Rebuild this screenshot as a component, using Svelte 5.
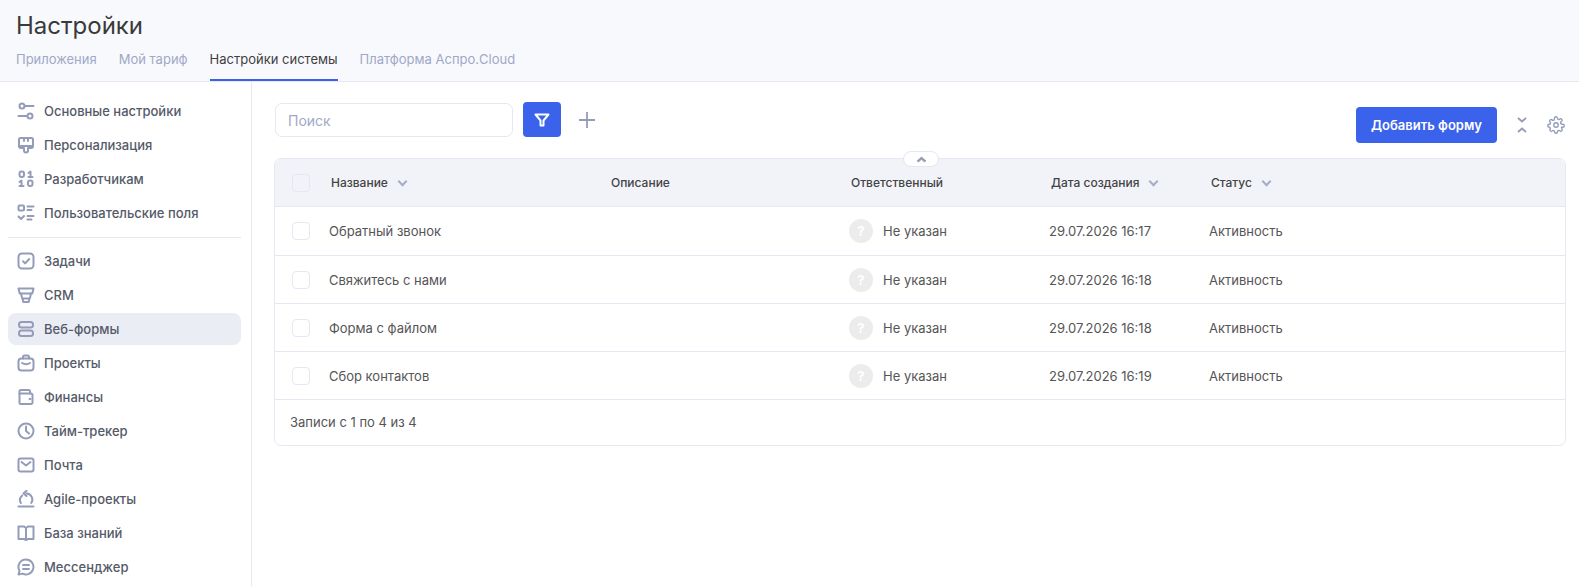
<script>
  const tabs = [
    { label: 'Приложения' },
    { label: 'Мой тариф' },
    { label: 'Настройки системы', active: true },
    { label: 'Платформа Аспро.Cloud' }
  ];

  const groupOne = [
    { label: 'Основные настройки', icon: 'sliders' },
    { label: 'Персонализация', icon: 'brush' },
    { label: 'Разработчикам', icon: 'binary' },
    { label: 'Пользовательские поля', icon: 'fields' }
  ];

  const groupTwo = [
    { label: 'Задачи', icon: 'task' },
    { label: 'CRM', icon: 'funnel' },
    { label: 'Веб-формы', icon: 'forms', active: true },
    { label: 'Проекты', icon: 'case' },
    { label: 'Финансы', icon: 'wallet' },
    { label: 'Тайм-трекер', icon: 'clock' },
    { label: 'Почта', icon: 'mail' },
    { label: 'Agile-проекты', icon: 'agile' },
    { label: 'База знаний', icon: 'book' },
    { label: 'Мессенджер', icon: 'chat' }
  ];

  const rows = [
    { name: 'Обратный звонок', date: '29.07.2026 16:17' },
    { name: 'Свяжитесь с нами', date: '29.07.2026 16:18' },
    { name: 'Форма с файлом', date: '29.07.2026 16:18' },
    { name: 'Сбор контактов', date: '29.07.2026 16:19' }
  ];

  const icons = {
    sliders: '<circle cx="5" cy="4" r="2.500"/><path d="M8 4h8.500"/><circle cx="13" cy="14" r="2.500"/><path d="M1.500 14H10"/>',
    brush: '<path d="M3.500 2h11A1.500 1.500 0 0 1 16 3.500V10H2V3.500A1.500 1.500 0 0 1 3.500 2z"/><path d="M2 10a2 2 0 0 0 2 2h3v2.500a2 2 0 0 0 4 0V12h3a2 2 0 0 0 2-2"/><path d="M7 2v3M11 2v3"/>',
    binary: '<rect x="2.500" y="1.500" width="4.500" height="5.500" rx="2"/><path d="M11.500 3l2-1.500V7M11.500 7h4"/><path d="M2.500 12l2-1.500V16M2.500 16h4"/><rect x="11" y="10.500" width="4.500" height="5.500" rx="2"/>',
    fields: '<rect x="1.500" y="1.500" width="5.500" height="5" rx="1"/><path d="M10.500 2.500h6M10.500 6h4M10.500 12h6M10.500 15.500h4M1.500 12.500l2.500 2.500 3-3"/>',
    task: '<rect x="1.500" y="1.500" width="15" height="15" rx="3.500"/><path d="M6 9.200l2.200 2.200L12.200 7"/>',
    funnel: '<path d="M1.500 2.500h15l-1.200 5H2.700z"/><path d="M4 7.500l1.200 5h7.600l1.200-5M5.500 12.500l.8 3.500h5.400l.8-3.500"/>',
    forms: '<rect x="2" y="2" width="14" height="5.500" rx="2.500"/><rect x="2" y="10.500" width="14" height="5.500" rx="2.500"/>',
    case: '<rect x="1.500" y="4.500" width="15" height="12" rx="3"/><path d="M6 4.500V3a1.500 1.500 0 0 1 1.500-1.500h3A1.500 1.500 0 0 1 12 3v1.500M5 9c2.500 1.500 5.500 1.500 8 0"/>',
    wallet: '<path d="M2.500 5.500V14.500A1.500 1.500 0 0 0 4 16h10a1.500 1.500 0 0 0 1.500-1.500V7A1.500 1.500 0 0 0 14 5.500H2.500z"/><path d="M2.500 5.500V3.500A1.500 1.500 0 0 1 4 2h7.500A1.500 1.500 0 0 1 13 3.500v2"/><path d="M12.500 11h1"/>',
    clock: '<circle cx="9" cy="9" r="7.500"/><path d="M9 4.500V9l3 2.500"/>',
    mail: '<rect x="1.500" y="2.500" width="15" height="13" rx="2"/><path d="M4.500 6l4.500 3.500L13.500 6"/>',
    agile: '<path d="M1.500 16.500h15"/><path d="M3.800 13a6 6 0 0 1 1.400-7.500"/><path d="M9.500 3.500a6 6 0 0 1 4.700 9.500"/><path d="M9.500 .8L6.500 3.500l3 2.500"/>',
    book: '<path d="M1.500 2.500H7L9 4l2-1.500h5.500v12.500H11L9 16l-2-1H1.500zM9 4v12"/>',
    chat: '<path d="M9 1.500a7.500 7.500 0 1 1-3.600 14.100L1.500 16.500l1-3.700A7.500 7.500 0 0 1 9 1.500z"/><path d="M6 7h6M6 11h6"/>'
  };
</script>

<div class="page">
  <header class="top">
    <h1>Настройки</h1>
    <nav class="tabs">
      {#each tabs as tab}
        <span class="tab" class:active={tab.active}>{tab.label}</span>
      {/each}
    </nav>
  </header>

  <div class="body">
    <aside class="side">
      {#each groupOne as item}
        <div class="item">
          <svg class="ic" viewBox="0 0 18 18">{@html icons[item.icon]}</svg>
          <span>{item.label}</span>
        </div>
      {/each}
      <div class="sep"></div>
      {#each groupTwo as item}
        <div class="item" class:active={item.active}>
          <svg class="ic" viewBox="0 0 18 18">{@html icons[item.icon]}</svg>
          <span>{item.label}</span>
        </div>
      {/each}
    </aside>

    <main class="content">
      <div class="toolbar">
        <div class="search">Поиск</div>
        <button class="filter" aria-label="Фильтр">
          <svg viewBox="0 0 16 16" width="16" height="16"><path d="M1.500 2.500h13L9.500 8.500v5h-3v-5z" /></svg>
        </button>
        <svg class="plus" viewBox="0 0 18 18" width="18" height="18"><path d="M9 1v16M1 9h16" /></svg>
        <div class="right">
          <button class="add">Добавить форму</button>
          <svg class="collapse" viewBox="0 0 12 18" width="12" height="18"><path d="M2 2l4 3.500L10 2M2 16l4-3.500 4 3.500" /></svg>
          <svg class="gear" viewBox="0 0 24 24" width="18" height="18">
            <circle cx="12" cy="12" r="3" />
            <path d="M19.400 15a1.650 1.650 0 0 0 .33 1.820l.06.06a2 2 0 1 1-2.830 2.830l-.06-.06a1.650 1.650 0 0 0-2.800 1.170V21a2 2 0 0 1-4 0v-.09a1.650 1.650 0 0 0-2.820-1.110l-.06.06a2 2 0 1 1-2.830-2.830l.06-.06A1.650 1.650 0 0 0 3.090 15H3a2 2 0 0 1 0-4h.09a1.650 1.650 0 0 0 1.110-2.820l-.06-.06a2 2 0 1 1 2.830-2.830l.06.06A1.650 1.650 0 0 0 9.830 4.200V3a2 2 0 0 1 4 0v.09a1.650 1.650 0 0 0 2.800 1.170l.06-.06a2 2 0 1 1 2.830 2.830l-.06.06A1.650 1.650 0 0 0 20.910 11H21a2 2 0 0 1 0 4z" />
          </svg>
        </div>
      </div>

      <div class="table">
        <button class="fold" aria-label="Свернуть">
          <svg viewBox="0 0 12 8" width="11" height="7"><path d="M1.500 6.500L6 2.500l4.500 4" /></svg>
        </button>
        <div class="row head">
          <span class="check"></span>
          <span class="th">Название <i class="sort"></i></span>
          <span class="th">Описание</span>
          <span class="th">Ответственный</span>
          <span class="th">Дата создания <i class="sort"></i></span>
          <span class="th">Статус <i class="sort"></i></span>
        </div>
        {#each rows as row}
          <div class="row">
            <span class="check"></span>
            <span>{row.name}</span>
            <span></span>
            <span class="owner"><span class="avatar">?</span><span class="nobody">Не указан</span></span>
            <span>{row.date}</span>
            <span>Активность</span>
          </div>
        {/each}
        <div class="foot">Записи с 1 по 4 из 4</div>
      </div>
    </main>
  </div>
</div>

<style>
  :global(body) {
    margin: 0;
    background: #fff;
  }

  .page {
    height: 586px;
    overflow: hidden;
    font-family: Inter, "Liberation Sans", sans-serif;
    font-size: 13px;
    color: #555;
  }

  .top {
    height: 81px;
    background: #f8f9fd;
    border-bottom: 1px solid #e5e7f1;
    padding-left: 16px;
  }

  h1 {
    margin: 0;
    padding-top: 11px;
    height: 36px;
    font-size: 24px;
    line-height: 30px;
    font-weight: 400;
    color: #3a3a3a;
  }

  .tabs {
    display: flex;
    gap: 22px;
  }

  .tab {
    height: 34px;
    line-height: 24px;
    box-sizing: border-box;
    font-size: 13px;
    color: #9fa8c7;
    border-bottom: 2px solid transparent;
  }

  .tab.active {
    color: #3f3f3f;
    border-bottom-color: #3a62eb;
  }

  .body {
    display: flex;
    height: 504px;
  }

  .side {
    width: 252px;
    flex: none;
    box-sizing: border-box;
    border-right: 1px solid #e5e7f1;
    padding: 13px 10px 0 8px;
  }

  .item {
    height: 32px;
    margin-bottom: 2px;
    display: flex;
    align-items: center;
    gap: 9px;
    padding-left: 9px;
    border-radius: 8px;
    font-size: 13px;
    font-weight: 500;
    color: #555a68;
  }

  .item.active {
    background: #ebedf5;
  }

  .ic {
    width: 18px;
    height: 18px;
    flex: none;
    fill: none;
    stroke: #949cba;
    stroke-width: 2;
    stroke-linecap: round;
    stroke-linejoin: round;
  }

  .sep {
    height: 1px;
    background: #e5e7f1;
    margin: 8px 0 7px;
  }

  .content {
    flex: 1;
    padding: 20px 13px 0 22px;
    min-width: 0;
  }

  .toolbar {
    display: flex;
    align-items: flex-start;
    height: 56px;
  }

  .search {
    width: 238px;
    height: 34px;
    margin: 1px 0 0 1px;
    box-sizing: border-box;
    border: 1px solid #e5e7f1;
    border-radius: 7px;
    padding-left: 12px;
    line-height: 34px;
    font-size: 14px;
    color: #9fa8c7;
  }

  .filter {
    width: 38px;
    height: 35px;
    margin-left: 10px;
    border: none;
    border-radius: 4px;
    background: #3a62eb;
    display: flex;
    align-items: center;
    justify-content: center;
    padding: 0;
  }

  .filter path {
    fill: none;
    stroke: #fff;
    stroke-width: 2;
    stroke-linejoin: round;
  }

  .plus {
    margin: 9px 0 0 17px;
    fill: none;
    stroke: #949cba;
    stroke-width: 1.8;
  }

  .right {
    margin-left: auto;
    display: flex;
    align-items: center;
    margin-top: 5px;
  }

  .add {
    width: 141px;
    height: 36px;
    border: none;
    border-radius: 4px;
    background: #3a62eb;
    color: #fff;
    font: 600 13px Inter, "Liberation Sans", sans-serif;
    padding: 0;
  }

  .collapse {
    margin-left: 19px;
    fill: none;
    stroke: #949cba;
    stroke-width: 1.8;
  }

  .gear {
    margin-left: 19px;
    margin-right: 1px;
    fill: none;
    stroke: #949cba;
    stroke-width: 1.8;
  }

  .table {
    position: relative;
    border: 1px solid #e5e7f1;
    border-radius: 7px;
  }

  .fold {
    position: absolute;
    top: -8px;
    left: 628px;
    width: 36px;
    height: 16px;
    padding: 0;
    border: 1px solid #e5e7f1;
    border-radius: 8px;
    background: #fff;
    display: flex;
    align-items: center;
    justify-content: center;
  }

  .fold path {
    fill: none;
    stroke: #949cba;
    stroke-width: 2.8;
  }

  .row {
    display: grid;
    grid-template-columns: 37px 280px 240px 200px 160px 1fr;
    align-items: center;
    box-sizing: border-box;
    height: 48px;
    padding-left: 17px;
    border-bottom: 1px solid #e5e7f1;
    font-size: 13px;
    color: #555;
  }

  .row.head {
    background: #f1f3f9;
    border-radius: 7px 7px 0 0;
    color: #444;
  }

  .head + .row {
    height: 49px;
  }

  .th {
    display: flex;
    align-items: center;
    font-size: 12px;
    font-weight: 500;
    padding-left: 2px;
    gap: 11px;
  }

  .sort {
    width: 5px;
    height: 5px;
    margin-top: -3px;
    border-right: 2px solid #a5adca;
    border-bottom: 2px solid #a5adca;
    transform: rotate(45deg);
  }

  .check {
    width: 18px;
    height: 18px;
    box-sizing: border-box;
    border: 1px solid #e5e7f1;
    border-radius: 4px;
    background: #fff;
  }

  .head .check {
    background: #f1f3f9;
  }

  .owner {
    display: flex;
    align-items: center;
    gap: 10px;
  }

  .avatar {
    width: 24px;
    height: 24px;
    border-radius: 50%;
    background: #ececec;
    color: #fff;
    font-weight: 700;
    font-size: 13px;
    text-align: center;
    line-height: 24px;
  }

  .foot {
    height: 45px;
    line-height: 45px;
    padding-left: 15px;
    font-size: 13px;
    color: #555;
  }
</style>
